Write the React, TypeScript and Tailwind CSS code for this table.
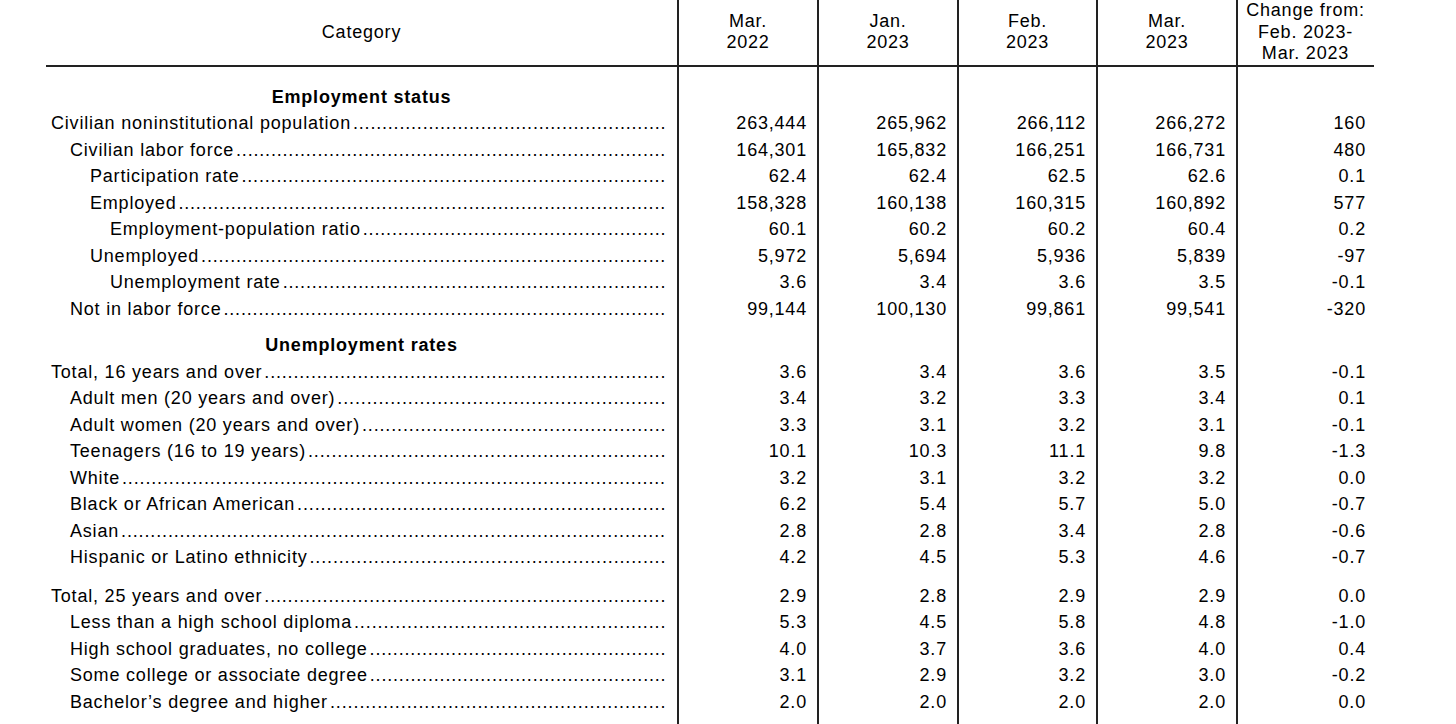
import React, { useLayoutEffect, useRef, useState } from 'react'

type Row = {
  label: string
  level: number
  values: string[]
}

const employment: Row[] = [
  { label: 'Civilian noninstitutional population', level: 0, values: ['263,444', '265,962', '266,112', '266,272', '160'] },
  { label: 'Civilian labor force', level: 1, values: ['164,301', '165,832', '166,251', '166,731', '480'] },
  { label: 'Participation rate', level: 2, values: ['62.4', '62.4', '62.5', '62.6', '0.1'] },
  { label: 'Employed', level: 2, values: ['158,328', '160,138', '160,315', '160,892', '577'] },
  { label: 'Employment-population ratio', level: 3, values: ['60.1', '60.2', '60.2', '60.4', '0.2'] },
  { label: 'Unemployed', level: 2, values: ['5,972', '5,694', '5,936', '5,839', '-97'] },
  { label: 'Unemployment rate', level: 3, values: ['3.6', '3.4', '3.6', '3.5', '-0.1'] },
  { label: 'Not in labor force', level: 1, values: ['99,144', '100,130', '99,861', '99,541', '-320'] },
]

const rates16: Row[] = [
  { label: 'Total, 16 years and over', level: 0, values: ['3.6', '3.4', '3.6', '3.5', '-0.1'] },
  { label: 'Adult men (20 years and over)', level: 1, values: ['3.4', '3.2', '3.3', '3.4', '0.1'] },
  { label: 'Adult women (20 years and over)', level: 1, values: ['3.3', '3.1', '3.2', '3.1', '-0.1'] },
  { label: 'Teenagers (16 to 19 years)', level: 1, values: ['10.1', '10.3', '11.1', '9.8', '-1.3'] },
  { label: 'White', level: 1, values: ['3.2', '3.1', '3.2', '3.2', '0.0'] },
  { label: 'Black or African American', level: 1, values: ['6.2', '5.4', '5.7', '5.0', '-0.7'] },
  { label: 'Asian', level: 1, values: ['2.8', '2.8', '3.4', '2.8', '-0.6'] },
  { label: 'Hispanic or Latino ethnicity', level: 1, values: ['4.2', '4.5', '5.3', '4.6', '-0.7'] },
]

const rates25: Row[] = [
  { label: 'Total, 25 years and over', level: 0, values: ['2.9', '2.8', '2.9', '2.9', '0.0'] },
  { label: 'Less than a high school diploma', level: 1, values: ['5.3', '4.5', '5.8', '4.8', '-1.0'] },
  { label: 'High school graduates, no college', level: 1, values: ['4.0', '3.7', '3.6', '4.0', '0.4'] },
  { label: 'Some college or associate degree', level: 1, values: ['3.1', '2.9', '3.2', '3.0', '-0.2'] },
  { label: 'Bachelor\u2019s degree and higher', level: 1, values: ['2.0', '2.0', '2.0', '2.0', '0.0'] },
]

const grid = 'grid grid-cols-[631px_140px_140px_139px_140px_137px]'
const line = 'border-l-2 border-[#222]'
const indent = ['pl-[5px]', 'pl-[24px]', 'pl-[44px]', 'pl-[64px]']

function EmptyRow({ h }: { h: string }) {
  return (
    <div className={`${grid} ${h}`}>
      <div />
      <div className={line} />
      <div className={line} />
      <div className={line} />
      <div className={line} />
      <div className={line} />
    </div>
  )
}

function SectionRow({ title }: { title: string }) {
  return (
    <div className={`${grid} h-[26.5px]`}>
      <div className="flex items-center justify-center font-bold">{title}</div>
      <div className={line} />
      <div className={line} />
      <div className={line} />
      <div className={line} />
      <div className={line} />
    </div>
  )
}

// leader dots: count + spacing measured so they run from the label to the column line
function Leader() {
  const boxRef = useRef<HTMLSpanElement>(null)
  const dotRef = useRef<HTMLSpanElement>(null)
  const [fill, setFill] = useState({ count: 1, spacing: 0.8 })

  useLayoutEffect(() => {
    if (!boxRef.current || !dotRef.current) return
    const dotW = dotRef.current.getBoundingClientRect().width
    const boxW = boxRef.current.getBoundingClientRect().width - 2
    if (dotW <= 0) return
    const count = Math.max(1, Math.floor(boxW / dotW))
    const extra = (boxW - count * dotW) / count
    setFill({ count, spacing: 0.8 + extra })
  }, [])

  return (
    <span ref={boxRef} className="flex-1 flex min-w-0 pl-[2px]">
      <span ref={dotRef} className="whitespace-nowrap" style={{ letterSpacing: `${fill.spacing}px` }}>
        {'.'.repeat(fill.count)}
      </span>
    </span>
  )
}

function DataRow({ row }: { row: Row }) {
  return (
    <div className={`${grid} h-[26.5px]`}>
      <div className={`flex items-center pr-[10px] min-w-0 ${indent[row.level]}`}>
        <span className="whitespace-nowrap">{row.label}</span>
        <Leader />
      </div>
      {row.values.map((v, i) => (
        <div
          key={i}
          className={`${line} flex items-center justify-end ${i === 4 ? 'pr-[7px]' : 'pr-[10px]'}`}
        >
          {v}
        </div>
      ))}
    </div>
  )
}

export default function App() {
  const heads = [
    ['Mar.', '2022'],
    ['Jan.', '2023'],
    ['Feb.', '2023'],
    ['Mar.', '2023'],
    ['Change from:', 'Feb. 2023-', 'Mar. 2023'],
  ]

  return (
    <div className="min-h-screen bg-white text-black text-[18px] leading-[21.5px] tracking-[0.8px] font-['Liberation_Sans',Arial,sans-serif] overflow-hidden">
      <div className="ml-[46px] w-[1328px]">
        {/* Header */}
        <div className={`${grid} h-[67px] border-b-2 border-[#222]`}>
          <div className="flex items-center justify-center pb-[6px]">Category</div>
          {heads.map((lines, i) => (
            <div key={i} className={`${line} flex flex-col items-center justify-center pb-[6px] text-center`}>
              {lines.map((l) => (
                <span key={l} className="whitespace-nowrap">{l}</span>
              ))}
            </div>
          ))}
        </div>

        <EmptyRow h="h-[17px]" />
        <SectionRow title="Employment status" />
        {employment.map((r) => (
          <DataRow key={r.label} row={r} />
        ))}

        <EmptyRow h="h-[10px]" />
        <SectionRow title="Unemployment rates" />
        {rates16.map((r) => (
          <DataRow key={r.label} row={r} />
        ))}

        <EmptyRow h="h-[12px]" />
        {rates25.map((r) => (
          <DataRow key={r.label} row={r} />
        ))}
        <EmptyRow h="h-[20px]" />
      </div>
    </div>
  )
}
